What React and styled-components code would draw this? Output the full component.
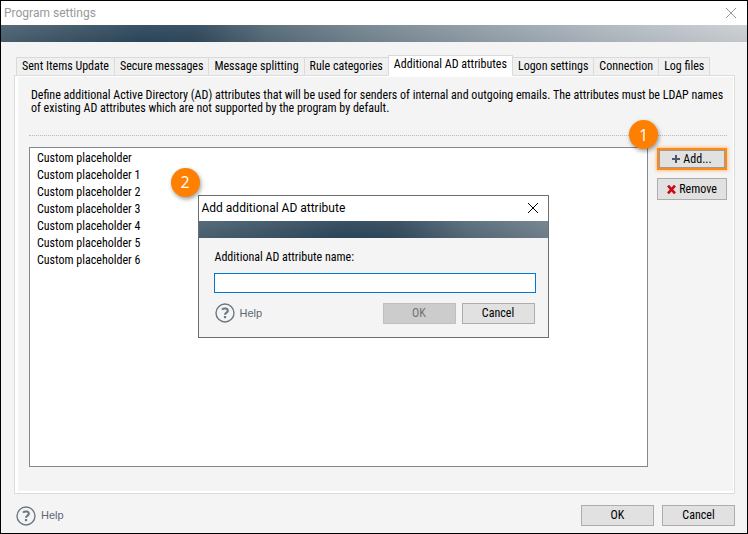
import React, { useId, useState } from "react";
import styled, { createGlobalStyle, css } from "styled-components";

const Global = createGlobalStyle`
  *, *::before, *::after { box-sizing: border-box; }
  body { margin: 0; background: #f4f4f4; }
  button, input { font: inherit; color: inherit; }
  ul { margin: 0; padding: 0; list-style: none; }
`;

const Window = styled.div`
  position: relative;
  display: flex;
  flex-direction: column;
  min-height: 100vh;
  border: 1px solid #000;
  background: #f4f4f4;
  color: #000;
  font: 12px/13px "Roboto Condensed", Roboto, sans-serif;
`;

const TitleBar = styled.header`
  display: flex;
  align-items: center;
  justify-content: space-between;
  height: ${(p) => (p.$active ? 25 : 24)}px;
  padding: 0 ${(p) => (p.$active ? 8 : 9)}px 0 3px;
  background: #fff;
  color: ${(p) => (p.$active ? "#000" : "#999")};
`;

const Title = styled.h1`
  margin: 0;
  font: 12px/16px Roboto, sans-serif;
`;

const CloseButton = styled.button`
  display: flex;
  padding: 1px;
  border: 0;
  background: none;
`;

const Banner = styled.div`
  flex: none;
  height: 17px;
  background:
    linear-gradient(rgba(255, 255, 255, 0.06), rgba(0, 0, 0, 0.04)),
    linear-gradient(105deg, #4c6272 0, #2d475b 140px, #31495d 190px, #556a78 260px, #70818d 340px, #94a1ab 480px, #b0b8c0 590px, #d0d4d8 748px);
`;

const Content = styled.main`
  display: flex;
  flex: 1;
  flex-direction: column;
  padding: 13px 12px 7px 13px;
`;

const TabList = styled.div`
  display: flex;
  align-items: flex-end;
  margin: 0 0 -1px 2px;
`;

const Tab = styled.button`
  height: 19px;
  margin-right: -1px;
  padding: 0 5px;
  border: 1px solid #dadada;
  background: #f0f0f0;
  white-space: nowrap;
  ${(p) => p.$selected && css`
    z-index: 1;
    height: 21px;
    padding-bottom: 2px;
    border-bottom-color: #fff;
    background: #fff;
  `}
`;

const Panel = styled.section`
  display: flex;
  flex: 1;
  flex-direction: column;
  padding: 10px 7px 26px 14px;
  border: 1px solid #dcdcdc;
  box-shadow: inset 3px 1px #fff, inset -1px -2px #fff;
`;

const Intro = styled.p`
  margin: 0 0 11px;
  padding: 3px 0 20px 2px;
  border-bottom: 1px dotted #bbb;
`;

const Columns = styled.div`
  display: flex;
  flex: 1;
  gap: 9px;
`;

const ListBox = styled.ul`
  flex: 1;
  padding: 2px 7px;
  border: 1px solid #828790;
  background: #fff;
`;

const ListItem = styled.li`
  line-height: 17px;
`;

const Actions = styled.div`
  position: relative;
  display: flex;
  flex-direction: column;
  gap: 8px;
  width: 70px;
  margin-top: 1px;
`;

const Button = styled.button`
  display: flex;
  align-items: center;
  justify-content: center;
  gap: 3px;
  width: ${(p) => (p.$side ? 70 : 73)}px;
  height: ${(p) => (p.$side ? 22 : 21)}px;
  padding: 0;
  border: 1px solid #adadad;
  background: #e1e1e1;
  white-space: nowrap;
  &:disabled { border-color: #bfbfbf; background: #ccc; color: #737373; }
  ${(p) => p.$marked && css`
    border: 2px solid #fb8a1c;
    box-shadow: 0 0 3px 1px #ffc08a, inset 0 0 0 1px #a39a90;
  `}
`;

const Footer = styled.footer`
  display: flex;
  align-items: center;
  gap: ${(p) => (p.$dialog ? 6 : 8)}px;
  padding: ${(p) => (p.$dialog ? "0 1px 13px 1px" : "4px 12px 7px 15px")};
`;

const HelpLink = styled.a`
  display: flex;
  align-items: center;
  gap: 5px;
  margin-right: auto;
  color: #5c6873;
  font: 11px/13px "Liberation Sans", sans-serif;
  text-decoration: none;
`;

const Overlay = styled.div`
  position: absolute;
  inset: 0 2px 2px 0;
  display: flex;
  align-items: center;
  justify-content: center;
`;

const Dialog = styled.div`
  position: relative;
  width: 351px;
  border: 1px solid #6d6d6d;
  background: #f4f4f4;
`;

const DialogBody = styled.form`
  display: flex;
  flex-direction: column;
  padding: 13px 12px 0 15px;
`;

const Label = styled.label`
  padding-left: 1px;
`;

const TextInput = styled.input`
  height: 20px;
  margin: 9px 0 10px;
  padding: 0 4px;
  border: 1px solid #0078d7;
  outline: 0;
  background: #fff;
`;

const Badge = styled.span`
  position: absolute;
  top: -28px;
  left: -28px;
  display: flex;
  align-items: center;
  justify-content: center;
  width: 29px;
  height: 29px;
  border-radius: 50%;
  background: #ff8000;
  box-shadow: 1px 2px 4px rgba(0, 0, 0, 0.4);
  color: #fff;
  font: 16px/20px "Open Sans", sans-serif;
`;

function CloseIcon() {
  return (
    <svg width="12" height="12" viewBox="0 0 12 12" fill="none" stroke="currentColor" aria-hidden="true">
      <path d="M1 1l10 10M11 1L1 11" />
    </svg>
  );
}

function HelpIcon() {
  return (
    <svg width="20" height="20" viewBox="0 0 20 20" fill="none" stroke="#6b7883" aria-hidden="true">
      <circle cx="10" cy="10" r="9" strokeWidth="1.4" />
      <path d="M7 6.6c1.6-1.7 5.8-1.4 5.8 1.1 0 1.9-2.8 1.9-2.8 4" strokeWidth="2.1" />
      <path d="M10 13v2.2" strokeWidth="2.2" />
    </svg>
  );
}

function PlusIcon() {
  return (
    <svg width="8" height="8" viewBox="0 0 8 8" stroke="#46586a" strokeWidth="2" aria-hidden="true">
      <path d="M4 0v8M0 4h8" />
    </svg>
  );
}

function CrossIcon() {
  return (
    <svg width="9" height="9" viewBox="0 0 9 9" stroke="#cc0a14" strokeWidth="2.6" aria-hidden="true">
      <path d="M1 .6l7 7.8M8 .6L1 8.4" />
    </svg>
  );
}

function Help() {
  return (
    <HelpLink href="#help">
      <HelpIcon />
      Help
    </HelpLink>
  );
}

const tabs = [
  "Sent Items Update",
  "Secure messages",
  "Message splitting",
  "Rule categories",
  "Additional AD attributes",
  "Logon settings",
  "Connection",
  "Log files",
];

const placeholders = [
  "Custom placeholder",
  ...[1, 2, 3, 4, 5, 6].map((n) => `Custom placeholder ${n}`),
];

export default function App() {
  const [name, setName] = useState("");
  const id = useId();
  return (
    <>
      <Global />
      <Window>
        <TitleBar>
          <Title>Program settings</Title>
          <CloseButton aria-label="Close"><CloseIcon /></CloseButton>
        </TitleBar>
        <Banner />
        <Content>
          <TabList role="tablist">
            {tabs.map((tab) => (
              <Tab key={tab} role="tab" aria-selected={tab === tabs[4]} $selected={tab === tabs[4]}>
                {tab}
              </Tab>
            ))}
          </TabList>
          <Panel role="tabpanel">
            <Intro>
              Define additional Active Directory (AD) attributes that will be used for senders of internal and outgoing emails. The attributes must be LDAP names of existing AD attributes which are not supported by the program by default.
            </Intro>
            <Columns>
              <ListBox role="listbox" aria-label="Additional AD attributes">
                {placeholders.map((item) => (
                  <ListItem key={item} role="option">{item}</ListItem>
                ))}
              </ListBox>
              <Actions>
                <Button $side $marked><PlusIcon />Add...</Button>
                <Button $side><CrossIcon />Remove</Button>
                <Badge>1</Badge>
              </Actions>
            </Columns>
          </Panel>
        </Content>
        <Footer>
          <Help />
          <Button>OK</Button>
          <Button>Cancel</Button>
        </Footer>
        <Overlay>
          <Dialog role="dialog" aria-labelledby={`${id}-title`}>
            <TitleBar $active>
              <Title as="h2" id={`${id}-title`}>Add additional AD attribute</Title>
              <CloseButton aria-label="Close"><CloseIcon /></CloseButton>
            </TitleBar>
            <Banner />
            <DialogBody onSubmit={(e) => e.preventDefault()}>
              <Label htmlFor={`${id}-name`}>Additional AD attribute name:</Label>
              <TextInput id={`${id}-name`} value={name} onChange={(e) => setName(e.target.value)} />
              <Footer as="div" $dialog>
                <Help />
                <Button disabled={!name}>OK</Button>
                <Button type="button">Cancel</Button>
              </Footer>
            </DialogBody>
            <Badge>2</Badge>
          </Dialog>
        </Overlay>
      </Window>
    </>
  );
}
